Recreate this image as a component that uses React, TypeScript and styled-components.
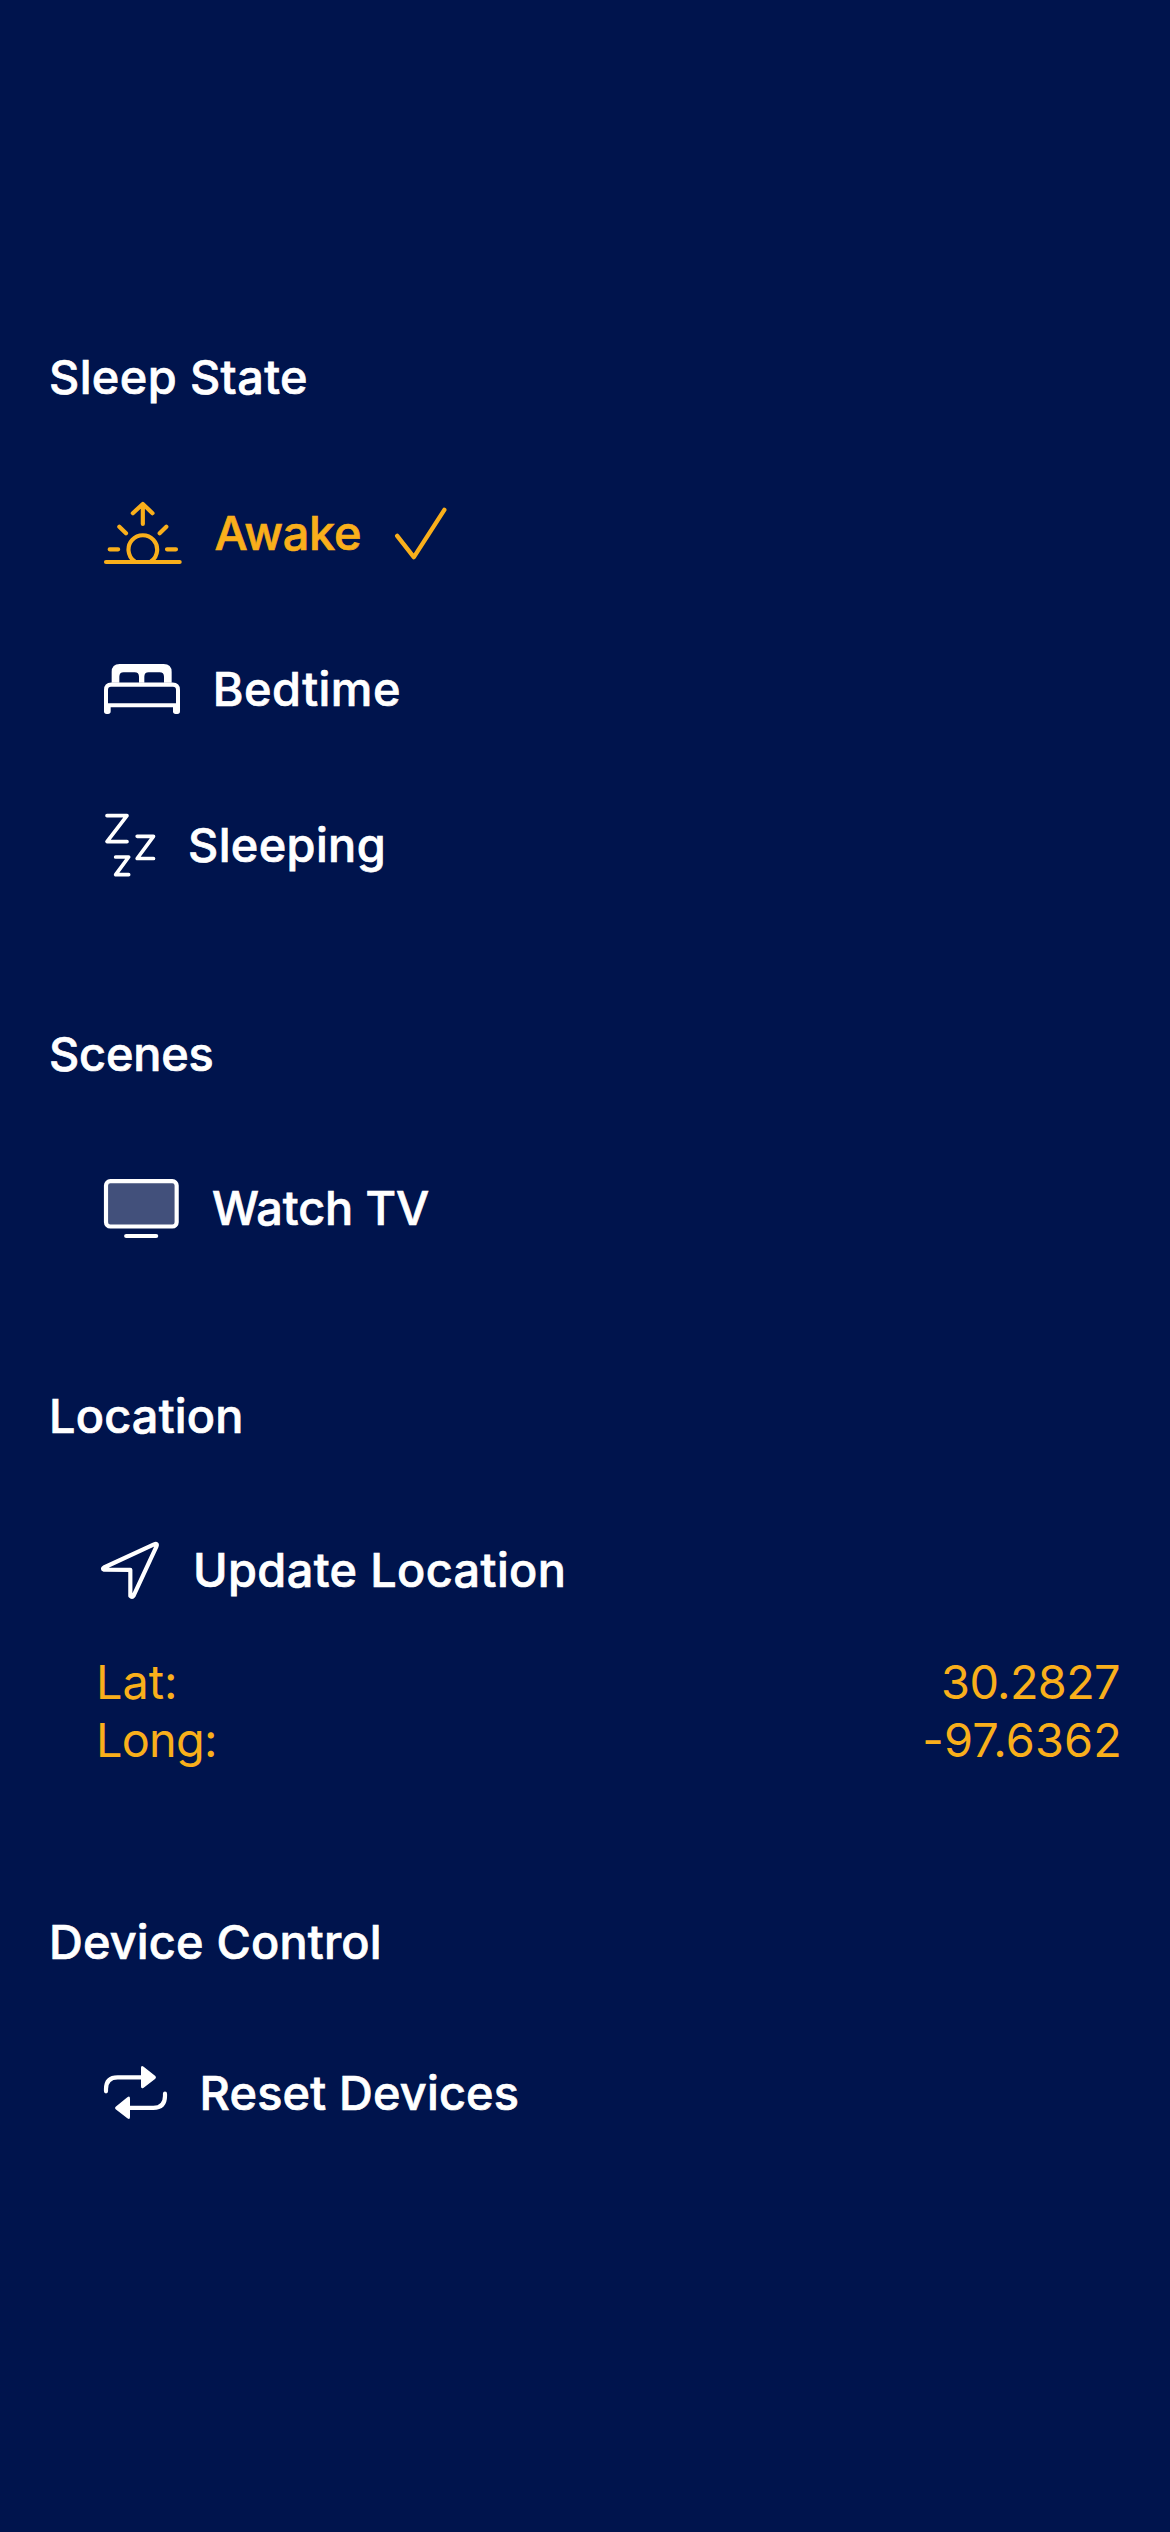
import React from 'react';
import styled, { createGlobalStyle, css } from 'styled-components';

const navy = '#00144d';
const amber = '#f9af1b';

const GlobalStyle = createGlobalStyle`
  html, body { margin: 0; padding: 0; background: ${navy}; }
`;

// Slightly heavier than Inter Medium, lighter than Semibold.
const emphasis = css`
  font-weight: 500;
  -webkit-text-stroke: 0.7px currentColor;
`;

const Screen = styled.main`
  box-sizing: border-box;
  width: 1170px;
  min-height: 2532px;
  padding-top: 348px;
  display: flex;
  flex-direction: column;
  background: ${navy};
  color: #fff;
  font-family: Inter, 'Liberation Sans', sans-serif;
  font-size: 46.8px;
  line-height: 58px;
`;

const Section = styled.section<{ $after?: number }>`
  display: flex;
  flex-direction: column;
  margin-bottom: ${(p) => p.$after ?? 0}px;
`;

const Heading = styled.h2<{ $track: number; $gap: number }>`
  margin: 0 0 ${(p) => p.$gap}px;
  padding-left: 49px;
  font-size: inherit;
  ${emphasis}
  letter-spacing: ${(p) => p.$track}px;
`;

const Rows = styled.div`
  display: flex;
  flex-direction: column;
  gap: 60px;
`;

const Row = styled.button<{ $active?: boolean }>`
  display: flex;
  align-items: center;
  gap: 32px;
  height: 96px;
  margin: 0;
  padding: 0 0 0 96px;
  border: 0;
  background: none;
  font: inherit;
  text-align: left;
  white-space: nowrap;
  color: ${(p) => (p.$active ? amber : '#fff')};
`;

const Label = styled.span<{ $track: number }>`
  ${emphasis}
  letter-spacing: ${(p) => p.$track}px;
`;

const Glyph = styled.svg<{ $width: number; $stroke?: number }>`
  flex: none;
  width: ${(p) => p.$width}px;
  height: 96px;
  overflow: visible;
  fill: none;
  stroke: currentColor;
  stroke-width: ${(p) => p.$stroke ?? 12.5};
  stroke-linecap: round;
  stroke-linejoin: round;
`;

const Coordinates = styled.dl`
  margin: 35px 0 0;
  padding: 0 48px 0 96px;
  display: flex;
  flex-direction: column;
  color: ${amber};
`;

const Coordinate = styled.div`
  display: flex;
  justify-content: space-between;
`;

const Name = styled.dt<{ $track: number }>`
  letter-spacing: ${(p) => p.$track}px;
`;

const Value = styled.dd<{ $track: number; $inset: number }>`
  margin: 0 ${(p) => p.$inset}px 0 0;
  letter-spacing: ${(p) => p.$track}px;
`;

// Glyphs are drawn at three units per pixel.
const Sunrise = () => (
  <Glyph $width={86.5} viewBox="18 15 259.5 288">
    <path d="M48 246H269M132.500 243A43 43 0 1 1 184.500 243M59 208H84.500M231 208H258M88 140L108 160M229 140L209 160M158.500 72V132M128.500 99.500L158.500 72L187.500 99.500" />
  </Glyph>
);

const Check = () => (
  <Glyph $width={55} $stroke={13} viewBox="906 15 165 288">
    <path d="M918.500 167.500L968.500 231.500L1060 89.500" />
  </Glyph>
);

const Bed = () => (
  <Glyph $width={84.8} viewBox="18 3 254.4 288">
    <path
      fill="currentColor"
      stroke="none"
      fillRule="evenodd"
      d="M65 128V96Q65 72 89 72H221Q245 72 245 96V128ZM88 128V110Q88 97 101 97H134Q147 97 147 110V128ZM163 128V110Q163 97 176 97H209Q222 97 222 110V128Z"
    />
    <path
      fill="currentColor"
      stroke="none"
      fillRule="evenodd"
      d="M42 214V150Q42 127.500 64 127.500H248Q270 127.500 270 150V214Q270 222 262 222H257Q249 222 249 214V202H62V214Q62 222 54 222H50Q42 222 42 214ZM54 190V149Q54 140 63 140H249Q258 140 258 149V190Z"
    />
  </Glyph>
);

const Zzz = () => (
  <Glyph $width={60} $stroke={11} viewBox="18 -7 180 288">
    <path d="M51 49H111L51 127H111M141.500 111H190.500L141.500 177.500H190.500M77 173H116L77 226H116" />
  </Glyph>
);

const Tv = () => (
  <Glyph $width={84} viewBox="18 3 252 288">
    <rect x="48" y="66.500" width="212" height="136" rx="13" fill="#fff" fillOpacity="0.26" />
    <path d="M108.500 231H198.500" />
  </Glyph>
);

const Arrow = () => (
  <Glyph $width={65} viewBox="18 9 195 288">
    <path d="M42 145.500L192 76Q203.500 71.500 199.500 82L130.500 230.500Q126 237 121 231V152.500L42 152Q36 149 42 145.500Z" />
  </Glyph>
);

const Repeat = () => (
  <Glyph $width={71.6} viewBox="18 -12 214.8 288">
    <path d="M48 127V120Q48 85 83 85H156M225 134V141Q225 176.500 190 176.500H117" />
    <path
      fill="currentColor"
      stroke="none"
      d="M153 57Q153 47 161 53L196 81Q200 85 196 89L161 116Q153 121 153 112ZM120 149Q120 139 112 145L77 173Q73 177 77 181L112 208Q120 214 120 204Z"
    />
  </Glyph>
);

export default function App() {
  return (
    <>
      <GlobalStyle />
      <Screen>
        <Section $after={132}>
          <Heading $track={0.42} $gap={79}>Sleep State</Heading>
          <Rows>
            <Row $active>
              <Sunrise />
              <Label $track={-0.25}>Awake</Label>
              <Check />
            </Row>
            <Row>
              <Bed />
              <Label $track={0.5}>Bedtime</Label>
            </Row>
            <Row>
              <Zzz />
              <Label $track={0.4}>Sleeping</Label>
            </Row>
          </Rows>
        </Section>
        <Section $after={131}>
          <Heading $track={-0.18} $gap={77}>Scenes</Heading>
          <Row>
            <Tv />
            <Label $track={-0.1}>Watch TV</Label>
          </Row>
        </Section>
        <Section $after={144}>
          <Heading $track={0.22} $gap={77}>Location</Heading>
          <Row>
            <Arrow />
            <Label $track={0.39}>Update Location</Label>
          </Row>
          <Coordinates>
            <Coordinate>
              <Name $track={0}>Lat:</Name>
              <Value $track={-0.62} $inset={2}>30.2827</Value>
            </Coordinate>
            <Coordinate>
              <Name $track={-0.7}>Long:</Name>
              <Value $track={0.2} $inset={0}>-97.6362</Value>
            </Coordinate>
          </Coordinates>
        </Section>
        <Section>
          <Heading $track={0.2} $gap={74}>Device Control</Heading>
          <Row>
            <Repeat />
            <Label $track={0.2}>Reset Devices</Label>
          </Row>
        </Section>
      </Screen>
    </>
  );
}
